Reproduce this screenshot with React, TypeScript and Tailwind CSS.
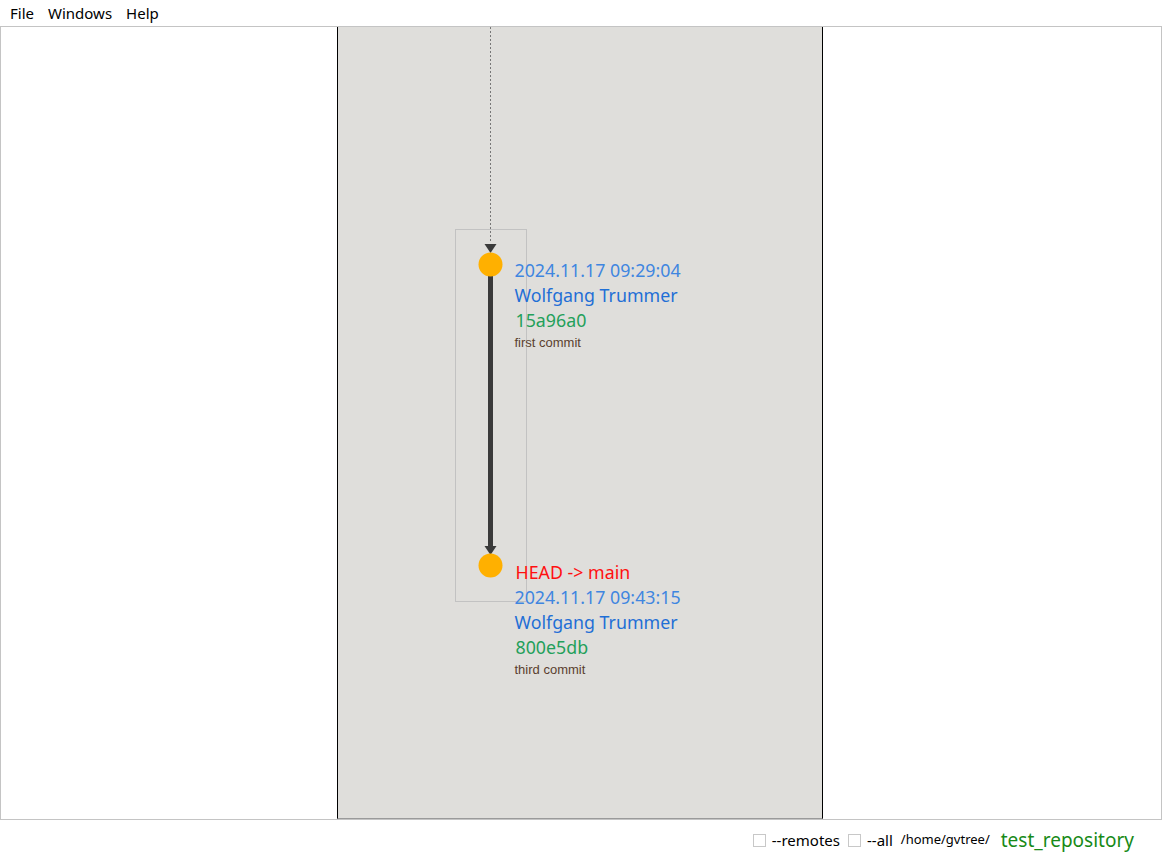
import React from "react";

const sans = { fontFamily: '"Noto Sans", "DejaVu Sans", sans-serif' };
const arial = { fontFamily: '"Liberation Sans", Arial, sans-serif' };

function Commit({ top, head, date, author, hash, msg }: { top: number; head?: string; date: string; author: string; hash: string; msg: string }) {
  return (
    <div className="absolute left-[177px] flex flex-col" style={{ top }}>
      {head && <div className="text-[17.8px] leading-[25px] text-[#ff1010] pl-[1px]" style={sans}>{head}</div>}
      <div className="text-[17.8px] leading-[25px] text-[#3f86e0]" style={sans}>{date}</div>
      <div className="text-[17.8px] leading-[25px] text-[#1f6fd6]" style={sans}>{author}</div>
      <div className="text-[17.8px] leading-[25px] text-[#23a05a] pl-[1px]" style={sans}>{hash}</div>
      <div className="text-[13px] leading-[20px] text-[#5a3e2e]" style={arial}>{msg}</div>
    </div>
  );
}

export default function App() {
  return (
    <div className="w-[1162px] h-[859px] bg-white flex flex-col overflow-hidden" style={sans}>
      <div className="h-[26px] flex items-center gap-[14px] pl-[10px] text-[15px] text-black">
        <span>File</span>
        <span>Windows</span>
        <span>Help</span>
      </div>
      <div className="h-[794px] border border-[#c4c4c4] flex justify-center">
        <div className="relative ml-[-3px] w-[486px] h-full bg-[#dfdedb] border-l border-r border-black border-b border-b-[#9a9a9a]">
          <svg className="absolute left-0 top-0" width="486" height="792">
            <line x1="152.5" y1="0" x2="152.5" y2="216" stroke="#777" strokeWidth="1" strokeDasharray="2,2" />
            <polygon points="146.5,217 158.5,217 152.5,226" fill="#3a3a3a" />
            <rect x="117.5" y="202.5" width="71" height="372" fill="none" stroke="#c2c2c2" strokeWidth="1" />
            <line x1="152.5" y1="248" x2="152.5" y2="520" stroke="#3a3a3a" strokeWidth="5" />
            <polygon points="146.5,519 158.5,519 152.5,528" fill="#3a3a3a" />
            <circle cx="152.5" cy="237.5" r="12" fill="#ffb000" />
            <circle cx="152.5" cy="538.5" r="12" fill="#ffb000" />
          </svg>
          <Commit top={231} date="2024.11.17 09:29:04" author="Wolfgang Trummer" hash="15a96a0" msg="first commit" />
          <Commit top={533} head="HEAD -> main" date="2024.11.17 09:43:15" author="Wolfgang Trummer" hash="800e5db" msg="third commit" />
        </div>
      </div>
      <div className="flex-1 flex items-center justify-end pr-[28px] pt-[1px]">
        <span className="w-[13px] h-[13px] border border-[#c8c8c8] bg-white mr-[6px]" />
        <span className="text-[15px] text-black mr-[8px]">--remotes</span>
        <span className="w-[13px] h-[13px] border border-[#c8c8c8] bg-white mr-[6px]" />
        <span className="text-[15px] text-black mr-[8px]">--all</span>
        <span className="text-[13px] text-black mr-[11px]">/home/gvtree/</span>
        <span className="text-[19px] text-[#178a17]">test_repository</span>
      </div>
    </div>
  );
}
